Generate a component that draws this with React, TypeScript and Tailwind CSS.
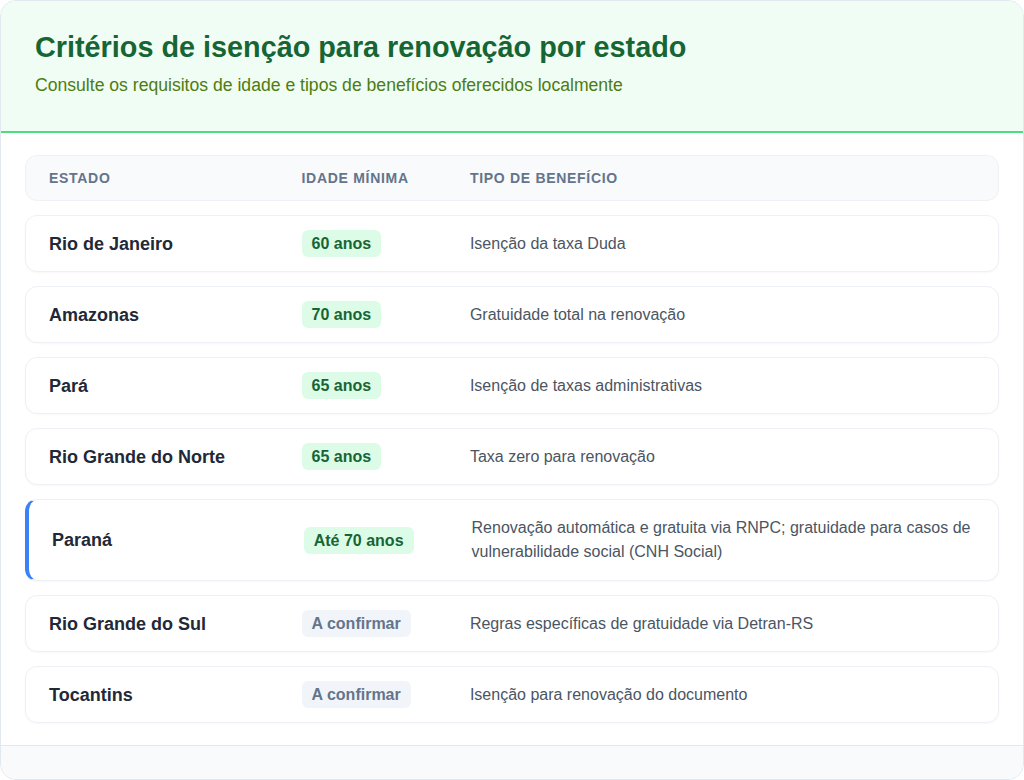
type Row = {
  state: string
  age: string
  benefit: string
  pending?: boolean
  highlight?: boolean
}

const rows: Row[] = [
  { state: "Rio de Janeiro", age: "60 anos", benefit: "Isenção da taxa Duda" },
  { state: "Amazonas", age: "70 anos", benefit: "Gratuidade total na renovação" },
  { state: "Pará", age: "65 anos", benefit: "Isenção de taxas administrativas" },
  { state: "Rio Grande do Norte", age: "65 anos", benefit: "Taxa zero para renovação" },
  {
    state: "Paraná",
    age: "Até 70 anos",
    benefit:
      "Renovação automática e gratuita via RNPC; gratuidade para casos de vulnerabilidade social (CNH Social)",
    highlight: true,
  },
  {
    state: "Rio Grande do Sul",
    age: "A confirmar",
    benefit: "Regras específicas de gratuidade via Detran-RS",
    pending: true,
  },
  {
    state: "Tocantins",
    age: "A confirmar",
    benefit: "Isenção para renovação do documento",
    pending: true,
  },
]

export default function App() {
  return (
    <div className="h-[780px] w-[1024px] bg-white font-['Liberation_Sans',Arial,sans-serif]">
      <div className="flex h-full flex-col overflow-hidden rounded-2xl border border-[#e2e8f0] bg-white">
        <header className="border-b-2 border-[#4ade80] bg-[#f0fdf4] px-[34px] pb-[33px] pt-[28px]">
          <h1 className="text-[28.8px] font-bold leading-9 text-[#166534]">
            Critérios de isenção para renovação por estado
          </h1>
          <p className="mt-[7px] text-[17.6px] leading-[26px] text-[#4d7c0f]">
            Consulte os requisitos de idade e tipos de benefícios oferecidos localmente
          </p>
        </header>

        <div className="flex flex-col gap-[14px] px-6 pb-[22px] pt-[22px]">
          <div className="grid grid-cols-[3fr_2fr_6fr] rounded-xl border border-[#eef1f5] bg-[#f8fafc] px-[23px] py-3 text-sm font-bold uppercase leading-5 tracking-[0.05em] text-[#64748b]">
            <div>Estado</div>
            <div>Idade mínima</div>
            <div>Tipo de benefício</div>
          </div>

          {rows.map((r) => (
            <div
              key={r.state}
              className={
                r.highlight
                  ? "grid grid-cols-[3fr_2fr_6fr] items-center rounded-xl border border-l-4 border-[#edf0f4] border-l-[#3b82f6] bg-white py-4 pl-[23px] pr-[23px] shadow-[0_1px_2px_rgba(15,23,42,0.03)]"
                  : "grid grid-cols-[3fr_2fr_6fr] items-center rounded-xl border border-[#edf0f4] bg-white px-[23px] py-[14px] shadow-[0_1px_2px_rgba(15,23,42,0.03)]"
              }
            >
              <div className="text-[18px] font-bold leading-6 text-[#1f2937]">{r.state}</div>
              <div>
                <span
                  className={
                    r.pending
                      ? "inline-block rounded-md bg-[#f1f5f9] px-2.5 py-1 text-base font-bold leading-[19px] text-[#64748b]"
                      : "inline-block rounded-md bg-[#dcfce7] px-2.5 py-1 text-base font-bold leading-[19px] text-[#166534]"
                  }
                >
                  {r.age}
                </span>
              </div>
              <div className="text-base leading-6 text-[#4b5563]">{r.benefit}</div>
            </div>
          ))}
        </div>

        <footer className="flex-1 border-t border-[#e2e8f0] bg-[#f8fafc]" />
      </div>
    </div>
  )
}
